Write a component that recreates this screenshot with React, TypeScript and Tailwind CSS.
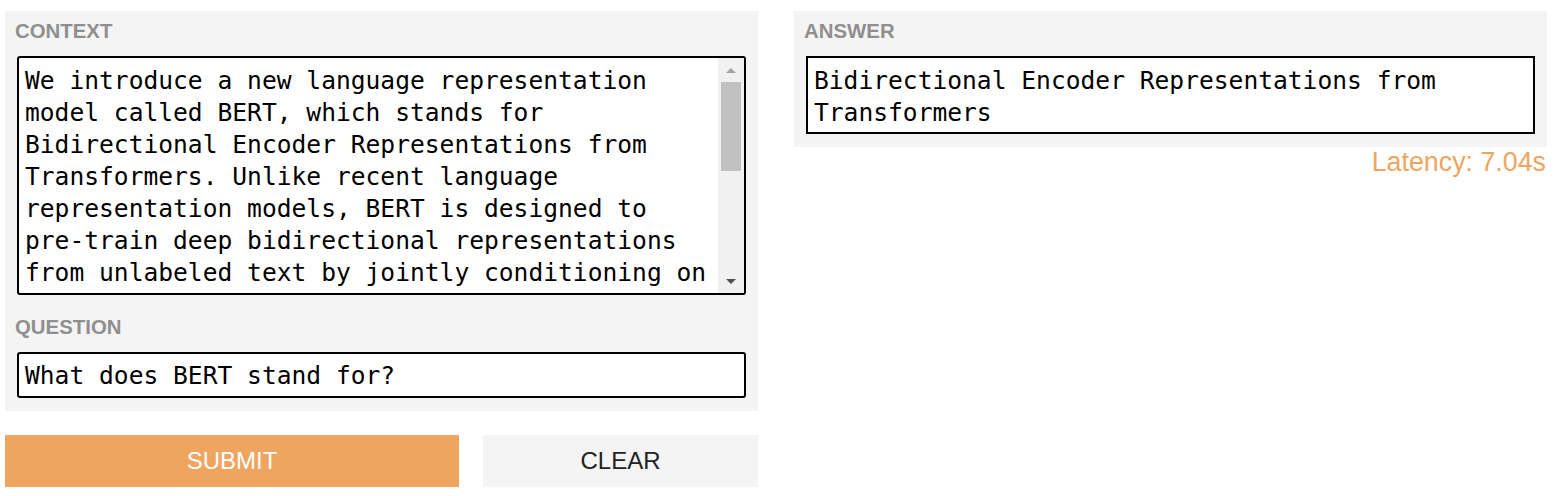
const context =
  'We introduce a new language representation model called BERT, which stands for Bidirectional Encoder Representations from Transformers. Unlike recent language representation models, BERT is designed to pre-train deep bidirectional representations from unlabeled text by jointly conditioning on both left and right context in all layers.'

function Label({ children }: { children: string }) {
  return (
    <div className="pl-[10px] font-['Liberation_Sans',Arial,sans-serif] text-[20.4px] font-bold leading-[24px] text-[#8f8f8f]">
      {children}
    </div>
  )
}

function FakeScrollbar() {
  return (
    <div className="flex w-[26px] shrink-0 flex-col bg-[#f1f1f1]">
      <div className="flex h-[24px] items-center justify-center">
        <div className="h-0 w-0 border-x-[5px] border-b-[5px] border-x-transparent border-b-[#a3a3a3]" />
      </div>
      <div className="mx-[3px] h-[89px] bg-[#c1c1c1]" />
      <div className="flex-1" />
      <div className="flex h-[24px] items-center justify-center">
        <div className="h-0 w-0 border-x-[5px] border-t-[5px] border-x-transparent border-t-[#505050]" />
      </div>
    </div>
  )
}

export default function App() {
  const mono = "font-['DejaVu_Sans_Mono',monospace] text-[24.6px] leading-[32px] text-black"
  return (
    <div className="flex gap-[36px] bg-white pl-[5px] pt-[11px]">
      {/* left column */}
      <div className="w-[753px] shrink-0">
        <div className="bg-[#f4f4f4] pb-[13px] pt-[8px]">
          <Label>CONTEXT</Label>
          <div className="mx-[12px] mt-[13px] flex h-[239px] overflow-hidden rounded-[3px] border-2 border-black bg-white">
            <div className={`flex-1 overflow-hidden pl-[6px] pr-[4px] pt-[7px] ${mono}`}>{context}</div>
            <FakeScrollbar />
          </div>
          <div className="mt-[20px]">
            <Label>QUESTION</Label>
          </div>
          <div className={`mx-[12px] mt-[13px] rounded-[3px] border-2 border-black bg-white pb-[4px] pl-[6px] pt-[6px] ${mono}`}>
            What does BERT stand for?
          </div>
        </div>
        <div className="mt-[24px] flex gap-[24px] font-['Liberation_Sans',Arial,sans-serif] text-[24px]">
          <button className="flex h-[52px] w-[454px] items-center justify-center bg-[#efa55f] text-white">
            SUBMIT
          </button>
          <button className="flex h-[52px] flex-1 items-center justify-center bg-[#f4f4f4] text-[#222]">
            CLEAR
          </button>
        </div>
      </div>

      {/* right column */}
      <div className="w-[753px] shrink-0">
        <div className="bg-[#f4f4f4] pb-[13px] pt-[8px]">
          <Label>ANSWER</Label>
          <div className={`mx-[12px] mt-[13px] h-[78px] border-2 border-black bg-white pl-[6px] pt-[7px] ${mono}`}>
            Bidirectional Encoder Representations from Transformers
          </div>
        </div>
        <div className="pr-[1px] text-right font-['Liberation_Sans',Arial,sans-serif] text-[26.8px] leading-[30px] text-[#efa55f]">
          Latency: 7.04s
        </div>
      </div>
    </div>
  )
}
